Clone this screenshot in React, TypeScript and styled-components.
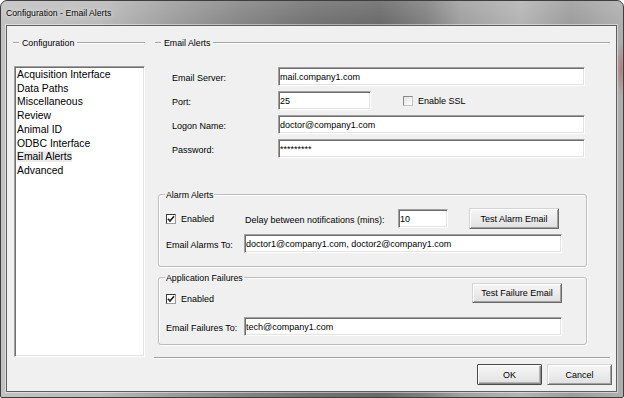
import React from "react";
import styled, { createGlobalStyle } from "styled-components";

const GlobalStyle = createGlobalStyle`
  html, body { margin: 0; padding: 0; width: 624px; height: 398px; overflow: hidden; background: #ffffff; }
  #root { width: 624px; height: 398px; }
  *, *::before, *::after { box-sizing: border-box; }
`;

const FONT = `"Liberation Sans", Arial, sans-serif`;

const Window = styled.div`
  width: 624px;
  height: 398px;
  display: flex;
  flex-direction: column;
  border: 1px solid #3e3e3e;
  border-radius: 7px 7px 2px 2px;
  overflow: hidden;
  font-family: ${FONT};
  background:
    radial-gradient(ellipse 5px 28px at 620px 68px, rgba(170, 85, 85, 0.55), rgba(170, 85, 85, 0) 100%),
    linear-gradient(180deg, rgba(255, 255, 255, 0.12) 0px, rgba(255, 255, 255, 0) 24px),
    linear-gradient(
      90deg,
      #c2c2c2 0px,
      #bababa 100px,
      #9e9e9e 170px,
      #858585 240px,
      #727272 310px,
      #6a6a6a 380px,
      #808080 425px,
      #a0a0a0 460px,
      #b4b4b4 520px,
      #9c9c9c 570px,
      #b0b0b0 624px
    );
`;

const TitleBar = styled.div`
  flex: none;
  height: 24px;
  display: flex;
  align-items: center;
  padding-left: 5px;
  font-size: 8.7px;
  color: #000;
  text-shadow: 0 0 6px rgba(255, 255, 255, 0.85), 0 0 2px rgba(255, 255, 255, 0.7);
`;

const Client = styled.div`
  flex: 1;
  margin: 0 6px 0 5px;
  border: 1px solid #5e5e5e;
  background: #f0f0f0;
  display: flex;
  flex-direction: column;
  box-shadow: 0 0 0 1px rgba(255, 255, 255, 0.45);
  color: #000;
`;

const BottomFrame = styled.div`
  flex: none;
  height: 5px;
`;

const Main = styled.div`
  display: grid;
  grid-template-columns: 131px 1fr;
  column-gap: 9px;
  padding: 11px 8px 0 7px;
`;

const LeftColumn = styled.div`
  display: flex;
  flex-direction: column;
`;

const RightColumn = styled.div`
  display: flex;
  flex-direction: column;
`;

const SectionHeader = styled.div<{ $ml: number; $mr: number }>`
  display: flex;
  align-items: center;
  height: 12px;
  margin: 0 ${(p) => p.$mr}px 0 ${(p) => p.$ml}px;
  font-size: 8.8px;
`;

const Rule = styled.span<{ $grow?: boolean }>`
  display: block;
  height: 2px;
  width: 6px;
  flex: ${(p) => (p.$grow ? "1" : "none")};
  border-top: 1px solid #a4a4a4;
  border-bottom: 1px solid #ffffff;
`;

const HeaderText = styled.span`
  margin: 0 3px;
  white-space: nowrap;
`;

const ListBox = styled.ul`
  flex: 1;
  margin: 17px 0 2px 0;
  padding: 1px 2px;
  list-style: none;
  background: #ffffff;
  border: 1px solid;
  border-color: #a0a0a0 #ffffff #ffffff #a0a0a0;
  box-shadow: inset 1px 1px 0 #6e6e6e, inset -1px -1px 0 #e3e3e3;
  font-size: 10.4px;
  line-height: 13.7px;
  color: #000;
`;

const ListItem = styled.li<{ $selected?: boolean }>`
  white-space: nowrap;
  span {
    background: ${(p) => (p.$selected ? "#ebebeb" : "transparent")};
  }
`;

const Form = styled.div`
  display: grid;
  grid-template-columns: 106px 1fr;
  row-gap: 5px;
  align-items: center;
  margin-top: 18px;
  padding: 0 26px 0 18px;
`;

const FieldLabel = styled.label<{ $w?: number }>`
  font-size: 9px;
  padding-top: 2px;
  white-space: nowrap;
  ${(p) => (p.$w ? `width: ${p.$w}px; flex: none;` : "")}
`;

const TextInput = styled.input<{ $w?: number }>`
  display: block;
  height: 19px;
  width: ${(p) => (p.$w ? `${p.$w}px` : "100%")};
  flex: none;
  margin: 0;
  padding: 0 1px;
  border: 1px solid;
  border-color: #a0a0a0 #ffffff #ffffff #a0a0a0;
  box-shadow: inset 1px 1px 0 #6e6e6e, inset -1px -1px 0 #e3e3e3;
  background: #ffffff;
  font-family: ${FONT};
  font-size: 9px;
  color: #000;
  outline: none;
`;

const InlineRow = styled.div`
  display: flex;
  align-items: center;
`;

const CheckField = styled.label<{ $w?: number; $ml?: number; $mt?: number }>`
  display: flex;
  align-items: center;
  gap: 5px;
  height: 12px;
  font-size: 9px;
  white-space: nowrap;
  flex: none;
  ${(p) => (p.$w ? `width: ${p.$w}px;` : "")}
  margin-left: ${(p) => p.$ml ?? 0}px;
  margin-top: ${(p) => p.$mt ?? 0}px;
`;

const CheckBox = styled.span<{ $checked?: boolean }>`
  display: flex;
  align-items: center;
  justify-content: center;
  width: 10px;
  height: 10px;
  border: 1px solid;
  border-color: ${(p) => (p.$checked ? "#3a3a3a #9a9a9a #9a9a9a #3a3a3a" : "#8a8a8a #c4c4c4 #c4c4c4 #8a8a8a")};
  background: ${(p) => (p.$checked ? "#ffffff" : "linear-gradient(135deg, #e2e2e2, #ffffff)")};
`;

const GroupBox = styled.div<{ $mt: number; $pad: string }>`
  position: relative;
  margin: ${(p) => p.$mt}px 24px 0 4px;
  padding: ${(p) => p.$pad};
  border: 1px solid #bcbcbc;
  border-radius: 3px;
  box-shadow: 1px 1px 0 #ffffff, inset 1px 1px 0 #ffffff;
`;

const GroupTitle = styled.span`
  position: absolute;
  top: -6px;
  left: 6px;
  padding: 0 1px;
  background: #f0f0f0;
  font-size: 8.8px;
  line-height: 12px;
  white-space: nowrap;
`;

const GroupRow = styled.div<{ $mt?: number; $align?: string }>`
  display: flex;
  align-items: ${(p) => p.$align ?? "center"};
  margin-top: ${(p) => p.$mt ?? 0}px;
`;

const PushButton = styled.button<{ $w: number; $h: number; $ml?: number; $auto?: boolean; $default?: boolean }>`
  flex: none;
  width: ${(p) => p.$w}px;
  height: ${(p) => p.$h}px;
  margin: 0;
  margin-left: ${(p) => (p.$auto ? "auto" : `${p.$ml ?? 0}px`)};
  padding: 0;
  border: 1px solid;
  border-color: ${(p) => (p.$default ? "#4a4a4a" : "#d4d4d4 #6a6a6a #6a6a6a #d4d4d4")};
  border-radius: 1px;
  background: linear-gradient(180deg, #f6f6f6 0%, #ececec 50%, #e0e0e0 100%);
  box-shadow: ${(p) =>
    p.$default
      ? "inset 1px 1px 0 #ffffff, inset -1px -1px 0 #8a8a8a, inset -2px -2px 0 #b4b4b4"
      : "inset 1px 1px 0 #ffffff, inset -1px -1px 0 #a0a0a0"};
  font-family: ${FONT};
  font-size: 9px;
  color: #000;
  cursor: default;
`;

const Separator = styled.div`
  height: 2px;
  margin: 12px 1px 0 0;
  border-top: 1px solid #a0a0a0;
  border-bottom: 1px solid #ffffff;
`;

const ButtonRow = styled.div`
  display: flex;
  justify-content: flex-end;
  gap: 5px;
  padding: 5px 4px 6px 0;
`;

const Check = ({ checked }: { checked?: boolean }) => (
  <CheckBox $checked={checked}>
    {checked && (
      <svg width="8" height="8" viewBox="0 0 8 8">
        <path d="M1 3.8 L3 6 L7 1.2" fill="none" stroke="#1e1e1e" strokeWidth="1.6" />
      </svg>
    )}
  </CheckBox>
);

const items = [
  "Acquisition Interface",
  "Data Paths",
  "Miscellaneous",
  "Review",
  "Animal ID",
  "ODBC Interface",
  "Email Alerts",
  "Advanced",
];

export default function App() {
  return (
    <>
      <GlobalStyle />
      <Window>
        <TitleBar>Configuration - Email Alerts</TitleBar>
        <Client>
          <Main>
            <LeftColumn>
              <SectionHeader $ml={-1} $mr={0}>
                <Rule />
                <HeaderText>Configuration</HeaderText>
                <Rule $grow />
              </SectionHeader>
              <ListBox>
                {items.map((it) => (
                  <ListItem key={it} $selected={it === "Email Alerts"}>
                    <span>{it}</span>
                  </ListItem>
                ))}
              </ListBox>
            </LeftColumn>
            <RightColumn>
              <SectionHeader $ml={1} $mr={1}>
                <Rule />
                <HeaderText>Email Alerts</HeaderText>
                <Rule $grow />
              </SectionHeader>
              <Form>
                <FieldLabel>Email Server:</FieldLabel>
                <TextInput readOnly defaultValue="mail.company1.com" />
                <FieldLabel>Port:</FieldLabel>
                <InlineRow>
                  <TextInput readOnly defaultValue="25" $w={93} />
                  <CheckField $ml={32}>
                    <Check />
                    Enable SSL
                  </CheckField>
                </InlineRow>
                <FieldLabel>Logon Name:</FieldLabel>
                <TextInput readOnly defaultValue="doctor@company1.com" />
                <FieldLabel>Password:</FieldLabel>
                <TextInput readOnly defaultValue="*********" />
              </Form>
              <GroupBox $mt={36} $pad="13px 24px 13px 7px">
                <GroupTitle>Alarm Alerts</GroupTitle>
                <GroupRow>
                  <CheckField $w={79}>
                    <Check checked />
                    Enabled
                  </CheckField>
                  <FieldLabel $w={153}>Delay between notifications (mins):</FieldLabel>
                  <TextInput readOnly defaultValue="10" $w={50} />
                  <PushButton $w={90} $h={21} $ml={21}>
                    Test Alarm Email
                  </PushButton>
                </GroupRow>
                <GroupRow $mt={5}>
                  <FieldLabel $w={78}>Email Alarms To:</FieldLabel>
                  <TextInput readOnly defaultValue="doctor1@company1.com, doctor2@company1.com" $w={318} />
                </GroupRow>
              </GroupBox>
              <GroupBox $mt={10} $pad="5px 24px 8px 7px">
                <GroupTitle>Application Failures</GroupTitle>
                <GroupRow $align="flex-start">
                  <CheckField $mt={10}>
                    <Check checked />
                    Enabled
                  </CheckField>
                  <PushButton $w={90} $h={20} $auto>
                    Test Failure Email
                  </PushButton>
                </GroupRow>
                <GroupRow $mt={12}>
                  <FieldLabel $w={78}>Email Failures To:</FieldLabel>
                  <TextInput readOnly defaultValue="tech@company1.com" $w={318} />
                </GroupRow>
              </GroupBox>
              <Separator />
            </RightColumn>
          </Main>
          <ButtonRow>
            <PushButton $w={65} $h={21} $default>
              OK
            </PushButton>
            <PushButton $w={65} $h={21}>
              Cancel
            </PushButton>
          </ButtonRow>
        </Client>
        <BottomFrame />
      </Window>
    </>
  );
}
